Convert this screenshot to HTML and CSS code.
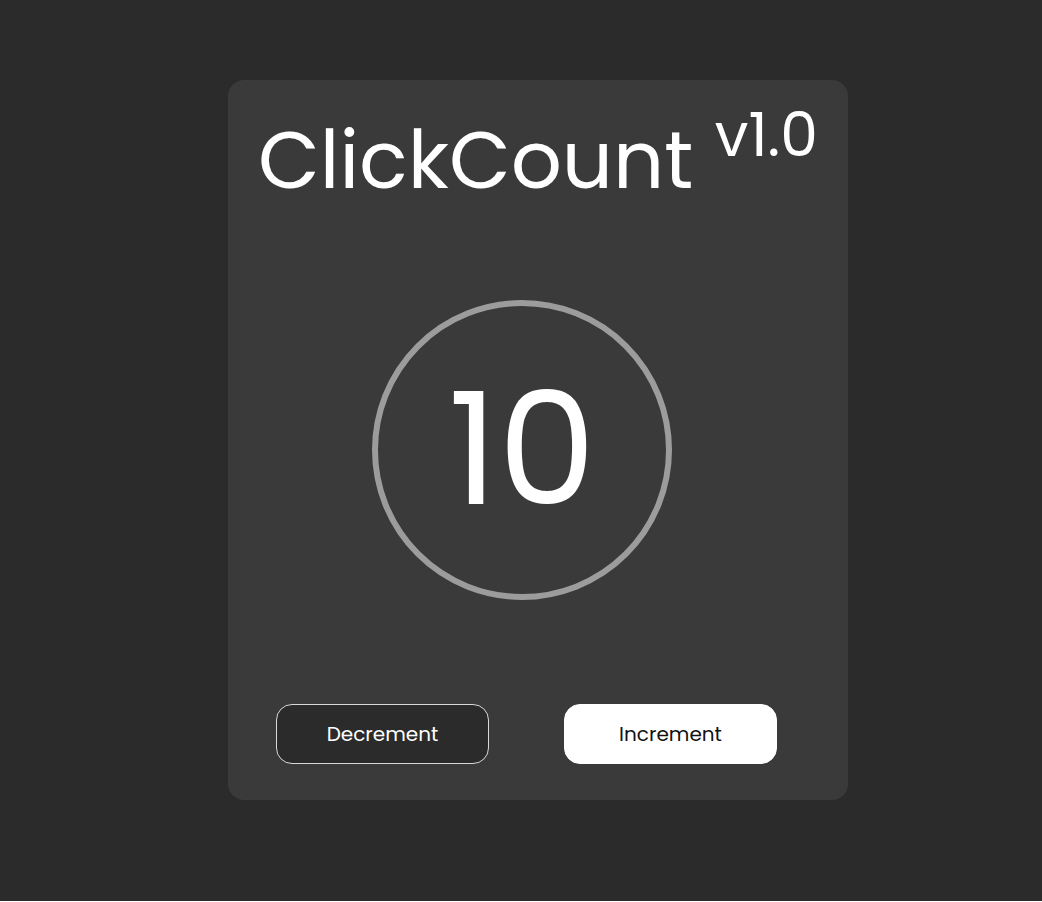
FILE: index.html
```html
<!DOCTYPE html>
<html lang="en">
<head>
<meta charset="utf-8">
<title>ClickCount</title>
<link rel="stylesheet" href="styles.css">
</head>
<body>
<div class="page">
  <main class="card">
    <h1 class="title">ClickCount <span class="version">v1.0</span></h1>
    <div class="counter"><span class="count">10</span></div>
    <div class="actions">
      <button class="btn btn-dec" type="button">Decrement</button>
      <button class="btn btn-inc" type="button">Increment</button>
    </div>
  </main>
</div>
</body>
</html>
```

FILE: styles.css
```css
html, body {
  margin: 0;
  padding: 0;
  background: #ffffff;
}

.page {
  box-sizing: border-box;
  height: 901px;
  background: #2b2b2b;
  padding: 80px 0 0 228px;
  font-family: "Poppins", "Inter", "Noto Sans", sans-serif;
}

.card {
  box-sizing: border-box;
  width: 620px;
  height: 720px;
  background: #3a3a3a;
  border-radius: 16px;
  padding: 0 0 0 30px;
  display: flex;
  flex-direction: column;
}

.title {
  margin: 30px 0 0 0;
  font-size: 80px;
  font-weight: 400;
  line-height: 100px;
  color: #ffffff;
  white-space: nowrap;
}

.version {
  font-size: 60px;
  position: relative;
  top: -32px;
}

.counter {
  box-sizing: border-box;
  width: 300px;
  height: 300px;
  margin: 83px 0 0 114px;
  border: 6px solid #9c9c9c;
  border-radius: 50%;
  display: flex;
  align-items: center;
  justify-content: center;
}

.count {
  color: #ffffff;
  font-size: 156px;
  line-height: 1;
}

.actions {
  display: flex;
  gap: 75px;
  margin: 104px 0 0 18px;
}

.btn {
  box-sizing: border-box;
  width: 213px;
  height: 60px;
  border-radius: 16px;
  font-family: "Poppins", "Inter", "Noto Sans", sans-serif;
  font-size: 20px;
  cursor: pointer;
}

.btn-dec {
  background: #2b2b2b;
  color: #ffffff;
  border: 1px solid #d8d8d8;
}

.btn-inc {
  background: #ffffff;
  color: #111111;
  border: 1px solid #ffffff;
}
```
